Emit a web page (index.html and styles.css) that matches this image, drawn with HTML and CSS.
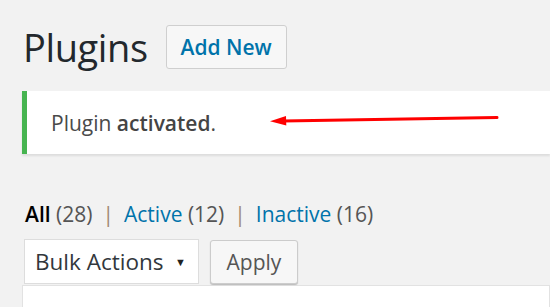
FILE: index.html
```html
<!DOCTYPE html>
<html lang="en">
<head>
<meta charset="utf-8">
<title>Plugins</title>
<link rel="stylesheet" href="styles.css">
</head>
<body>
<div class="wrap">
  <div class="page-header">
    <h1 class="page-title">Plugins</h1>
    <a class="page-title-action" href="#">Add New</a>
  </div>
  <div class="notice notice-success">
    <p>Plugin <strong>activated</strong>.</p>
    <svg class="annotation-arrow" width="240" height="20" viewBox="0 0 240 20">
      <path d="M228 4.5 L14 8" stroke="#f00" stroke-width="3" stroke-linecap="round" fill="none"/>
      <path d="M1 8.2 L17 3 L17.3 12.6 Z" fill="#f00"/>
    </svg>
  </div>
  <ul class="subsubsub">
    <li class="current">All <span class="count">(28)</span></li>
    <li class="sep">|</li>
    <li><a href="#">Active <span class="count">(12)</span></a></li>
    <li class="sep">|</li>
    <li><a href="#">Inactive <span class="count">(16)</span></a></li>
  </ul>
  <div class="tablenav">
    <div class="select">
      <span>Bulk Actions</span>
      <span class="caret">&#9660;</span>
    </div>
    <button class="button">Apply</button>
  </div>
  <div class="list-table"></div>
</div>
</body>
</html>
```

FILE: styles.css
```css
html, body {
  margin: 0;
  padding: 0;
}
body {
  background: #f2f2f2;
  font-family: "Open Sans", "Noto Sans", sans-serif;
  color: #32373c;
  overflow: hidden;
  height: 307px;
}
.wrap {
  padding-left: 22px;
}
.page-header {
  display: flex;
  align-items: center;
  margin-top: 25px;
  height: 44px;
}
.page-title {
  margin: 0 0 0 1px;
  font-size: 38px;
  letter-spacing: -0.4px;
  font-weight: 400;
  line-height: 44px;
  color: #23282d;
}
.page-title-action {
  margin-left: 18px;
  box-sizing: border-box;
  height: 44px;
  width: 121px;
  display: flex;
  align-items: center;
  justify-content: center;
  border: 1px solid #cfcfcf;
  border-radius: 3px;
  background: #f7f7f7;
  color: #0073aa;
  font-weight: 600;
  font-size: 21px;
  text-decoration: none;
}
.notice {
  position: relative;
  margin-top: 22px;
  height: 63px;
  box-sizing: border-box;
  background: #fff;
  border-left: 5px solid #46b450;
  box-shadow: 0 2px 2px rgba(0, 0, 0, 0.09);
  display: flex;
  align-items: center;
  padding-left: 24px;
}
.notice p {
  margin: 0;
  font-size: 21px;
  color: #4a4a4a;
}
.notice strong {
  font-weight: 600;
  color: #444;
}
.annotation-arrow {
  position: absolute;
  left: 242px;
  top: 22px;
}
.subsubsub {
  list-style: none;
  margin: 47px 0 0 0;
  padding: 0;
  display: flex;
  font-size: 21px;
  line-height: 26px;
  color: #666;
}
.subsubsub li {
  white-space: pre;
}
.subsubsub .current {
  color: #000;
  font-weight: 600;
  margin-left: 3px;
}
.subsubsub .current .count {
  font-weight: 400;
}
.subsubsub .count {
  color: #555;
}
.subsubsub .sep {
  color: #a08a70;
  margin: 0 10px 0 10px;
}
.subsubsub a {
  color: #0073aa;
  text-decoration: none;
}
.tablenav {
  display: flex;
  align-items: flex-start;
  margin-top: 12px;
  margin-left: 2px;
  height: 46px;
}
.select {
  box-sizing: border-box;
  width: 175px;
  height: 45px;
  border: 1px solid #ddd;
  background: #fff;
  display: flex;
  align-items: center;
  justify-content: space-between;
  padding: 0 12px 0 10px;
  font-size: 22.5px;
  color: #32373c;
}
.caret {
  font-size: 11px;
  color: #222;
}
.button {
  margin-left: 11px;
  margin-top: 1px;
  box-sizing: border-box;
  width: 88px;
  height: 44px;
  border: 1px solid #ccc;
  border-radius: 3px;
  background: #f7f7f7;
  box-shadow: 0 1px 1px #bbb;
  font-family: "Open Sans", "Noto Sans", sans-serif;
  font-size: 21px;
  color: #555;
  padding: 0;
}
.list-table {
  margin-top: 0;
  height: 40px;
  background: #fff;
  border: 1px solid #e2e2e2;
}
```
